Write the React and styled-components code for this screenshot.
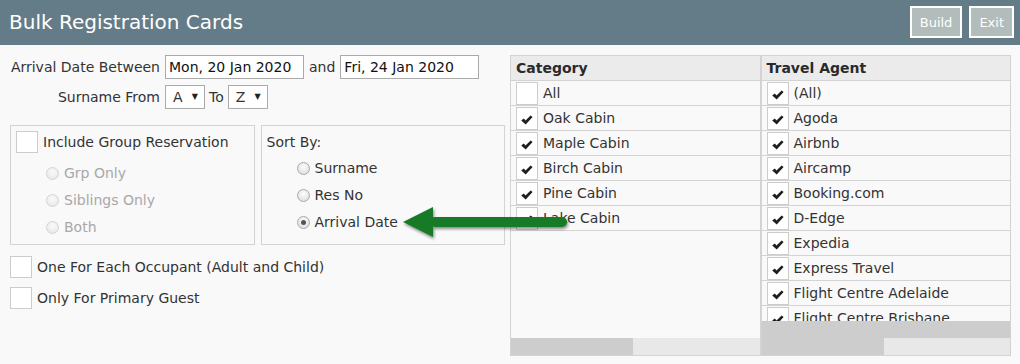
import React from 'react'
import styled, {createGlobalStyle} from 'styled-components'

const GlobalStyle = createGlobalStyle`
  html, body {
    margin: 0;
    padding: 0;
    background: #f9f9f9;
    font-family: "DejaVu Sans", Verdana, sans-serif;
    font-size: 14px;
    color: #333;
  }
`

const categories = [
  {name: 'All', checked: false},
  {name: 'Oak Cabin', checked: true},
  {name: 'Maple Cabin', checked: true},
  {name: 'Birch Cabin', checked: true},
  {name: 'Pine Cabin', checked: true},
  {name: 'Lake Cabin', checked: true},
]

const agents = ['(All)', 'Agoda', 'Airbnb', 'Aircamp', 'Booking.com', 'D-Edge', 'Expedia',
  'Express Travel', 'Flight Centre Adelaide', 'Flight Centre Brisbane']

export default function App() {
  return (
    <Page>
      <GlobalStyle />
      <Header>
        <Title>Bulk Registration Cards</Title>
        <Actions>
          <HeadButton>Build</HeadButton>
          <HeadButton>Exit</HeadButton>
        </Actions>
      </Header>

      <Body>
        <Form>
          <FieldGrid>
            <FieldLabel>Arrival Date Between</FieldLabel>
            <Inline>
              <DateInput>Mon, 20 Jan 2020</DateInput>
              <Joiner>and</Joiner>
              <DateInput>Fri, 24 Jan 2020</DateInput>
            </Inline>
            <FieldLabel>Surname From</FieldLabel>
            <Inline>
              <Select>A<Caret>▼</Caret></Select>
              <Joiner narrow>To</Joiner>
              <Select>Z<Caret>▼</Caret></Select>
            </Inline>
          </FieldGrid>

          <Groups>
            <GroupBox>
              <CheckRow>
                <Box />
                <span>Include Group Reservation</span>
              </CheckRow>
              <RadioList first={12}>
                <RadioRow disabled><Radio disabled />Grp Only</RadioRow>
                <RadioRow disabled><Radio disabled />Siblings Only</RadioRow>
                <RadioRow disabled><Radio disabled />Both</RadioRow>
              </RadioList>
            </GroupBox>
            <GroupBox>
              <SortTitle>Sort By:</SortTitle>
              <RadioList first={10}>
                <RadioRow><Radio />Surname</RadioRow>
                <RadioRow><Radio />Res No</RadioRow>
                <RadioRow><Radio selected />Arrival Date</RadioRow>
              </RadioList>
            </GroupBox>
          </Groups>

          <Options>
            <CheckRow>
              <Box />
              <span>One For Each Occupant (Adult and Child)</span>
            </CheckRow>
            <CheckRow>
              <Box />
              <span>Only For Primary Guest</span>
            </CheckRow>
          </Options>
        </Form>

        <Lists>
          <Column>
            <ColHead>Category</ColHead>
            <ColBody>
              {categories.map(c => (
                <Item key={c.name}>
                  <ItemBox>{c.checked && <Tick />}</ItemBox>
                  {c.name}
                </Item>
              ))}
            </ColBody>
            <Scrollbar thumb={122} />
          </Column>
          <Column>
            <ColHead>Travel Agent</ColHead>
            <ColBody>
              {agents.map(a => (
                <Item key={a}>
                  <ItemBox><Tick /></ItemBox>
                  {a}
                </Item>
              ))}
            </ColBody>
            <Filler />
            <Scrollbar thumb={122} />
          </Column>
        </Lists>
      </Body>

      <Arrow width="180" height="40" viewBox="0 0 180 40">
        <defs>
          <filter id="sh" x="-10%" y="-30%" width="120%" height="170%">
            <feDropShadow dx="1" dy="2" stdDeviation="1.5" floodColor="#000" floodOpacity="0.45" />
          </filter>
        </defs>
        <g filter="url(#sh)" fill="#177a27">
          <polygon points="3,17 33,2 33,32" />
          <rect x="30" y="12" width="137" height="10" rx="5" />
        </g>
      </Arrow>
    </Page>
  )
}

function Tick() {
  return (
    <svg width="12" height="10" viewBox="0 0 12 10">
      <path d="M0.2 5.6 L2.8 3.6 L4.5 5.6 L9.6 0.4 L11.6 2 L4.7 9.6 Z" fill="#1e1e1e" />
    </svg>
  )
}

const Page = styled.div`
  position: relative;
  width: 1020px;
  height: 364px;
  overflow: hidden;
  background: #f9f9f9;
`

const Header = styled.div`
  height: 45px;
  background: #647b88;
  display: flex;
  align-items: center;
  justify-content: space-between;
  padding: 0 6px 0 9px;
`

const Title = styled.div`
  color: #fff;
  font-size: 20px;
  margin-top: -1px;
`

const Actions = styled.div`
  display: flex;
  gap: 7px;
  align-self: flex-start;
  margin-top: 6px;
`

const HeadButton = styled.div`
  height: 32px;
  box-sizing: border-box;
  padding: 0 8px;
  border: 2px solid #fff;
  background: #b1bcbb;
  color: #fff;
  font-size: 13px;
  display: flex;
  align-items: center;
`

const Body = styled.div`
  display: flex;
  padding: 10px 0 0 10px;
  gap: 5px;
`

const Form = styled.div`
  width: 495px;
`

const FieldGrid = styled.div`
  display: grid;
  grid-template-columns: 150px auto;
  column-gap: 5px;
  row-gap: 6px;
  align-items: center;
`

const FieldLabel = styled.div`
  text-align: right;
  white-space: nowrap;
`

const Inline = styled.div`
  display: flex;
  align-items: center;
`

const DateInput = styled.div`
  width: 139px;
  height: 24px;
  box-sizing: border-box;
  border: 1px solid #aaa;
  background: #fff;
  padding: 0 3px;
  display: flex;
  align-items: center;
  color: #111;
  white-space: nowrap;
`

const Joiner = styled.span`
  margin: 0 ${p => (p.narrow ? 4 : 5)}px;
`

const Select = styled.div`
  width: 40px;
  height: 24px;
  box-sizing: border-box;
  border: 1px solid #aaa;
  background: #fff;
  display: flex;
  align-items: center;
  justify-content: space-between;
  padding: 0 6px 0 7px;
`

const Caret = styled.span`
  font-size: 8px;
  color: #222;
  margin-top: -2px;
`

const Groups = styled.div`
  display: flex;
  gap: 6px;
  margin-top: 16px;
`

const GroupBox = styled.div`
  width: 245px;
  height: 120px;
  box-sizing: border-box;
  border: 1px solid #d3d3d3;
  padding: 5px;
`

const CheckRow = styled.div`
  display: flex;
  align-items: center;
  gap: 5px;
`

const Box = styled.span`
  width: 22px;
  height: 22px;
  box-sizing: border-box;
  border: 1px solid #ccc;
  background: #fff;
  flex: none;
`

const SortTitle = styled.div`
  padding-top: 3px;
`

const RadioList = styled.div`
  display: flex;
  flex-direction: column;
  gap: 11px;
  padding-left: 30px;
  margin-top: ${p => p.first}px;
`

const RadioRow = styled.div`
  display: flex;
  align-items: center;
  gap: 5px;
  height: 16px;
  color: ${p => (p.disabled ? '#a8a8a8' : '#333')};
`

const Radio = styled.span`
  width: 13px;
  height: 13px;
  box-sizing: border-box;
  border-radius: 50%;
  border: 1px solid ${p => (p.disabled ? '#d4d4d4' : '#a9a9a9')};
  background: ${p => (p.disabled
    ? 'radial-gradient(circle at 50% 35%, #fafafa, #e4e4e4)'
    : 'radial-gradient(circle at 50% 35%, #fdfdfd, #d8d8d8)')};
  position: relative;
  flex: none;
  &::after {
    content: '';
    display: ${p => (p.selected ? 'block' : 'none')};
    position: absolute;
    left: 3px;
    top: 3px;
    width: 5px;
    height: 5px;
    border-radius: 50%;
    background: #555;
  }
`

const Options = styled.div`
  display: flex;
  flex-direction: column;
  gap: 9px;
  margin-top: 11px;
`

const Lists = styled.div`
  display: flex;
  width: 499px;
  height: 299px;
  border: 1px solid #d3d3d3;
  background: #f9f9f9;
`

const Column = styled.div`
  flex: 1;
  display: flex;
  flex-direction: column;
  min-width: 0;
  & + & {
    border-left: 2px solid #d3d3d3;
  }
`

const ColHead = styled.div`
  height: 25px;
  box-sizing: border-box;
  border-bottom: 1px solid #d3d3d3;
  background: #ebebeb;
  font-weight: bold;
  padding-left: 5px;
  display: flex;
  align-items: center;
  color: #2a2a2a;
`

const ColBody = styled.div`
  flex: 1;
  overflow: hidden;
`

const Item = styled.div`
  height: 25px;
  box-sizing: border-box;
  border-bottom: 1px solid #d3d3d3;
  display: flex;
  align-items: center;
  gap: 5px;
  padding-left: 5px;
  white-space: nowrap;
`

const ItemBox = styled.span`
  width: 22px;
  height: 23px;
  box-sizing: border-box;
  border: 1px solid #ccc;
  background: #fff;
  display: flex;
  align-items: center;
  justify-content: center;
  padding-top: 3px;
  flex: none;
`

const Filler = styled.div`
  height: 17px;
  background: #cdcdcd;
`

const Scrollbar = styled.div`
  height: 17px;
  background: linear-gradient(to right, #cdcdcd ${p => p.thumb}px, #e8e8e8 ${p => p.thumb}px);
`

const Arrow = styled.svg`
  position: absolute;
  left: 400px;
  top: 205px;
  overflow: visible;
`
